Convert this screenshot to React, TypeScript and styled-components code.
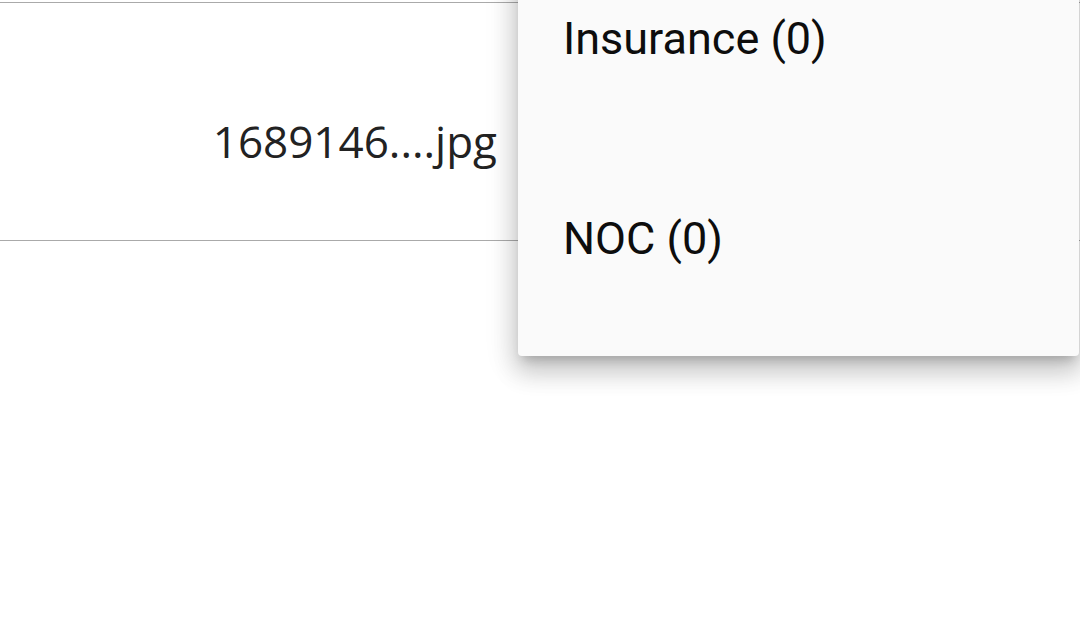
import React from "react";
import styled, { createGlobalStyle } from "styled-components";

const GlobalStyle = createGlobalStyle`
  html, body {
    margin: 0;
    padding: 0;
    background: #ffffff;
  }
  * { box-sizing: border-box; }
`;

const Stage = styled.div`
  position: relative;
  width: 1080px;
  height: 630px;
  overflow: hidden;
  background: #ffffff;
`;

const Table = styled.div`
  padding-top: 2px;
`;

const Row = styled.div`
  display: grid;
  grid-template-columns: 497px 1fr;
  height: 239px;
  border-top: 1px solid #aaaaaa;
  border-bottom: 1px solid #aaaaaa;
`;

const FileCell = styled.div`
  display: flex;
  justify-content: flex-end;
  align-items: flex-start;
  padding-top: 108px;
  font-family: "Open Sans", "Noto Sans", sans-serif;
  font-size: 44px;
  color: #222222;
  white-space: nowrap;
`;

const Menu = styled.ul`
  position: absolute;
  top: -77px;
  left: 518px;
  width: 561px;
  margin: 0;
  padding: 16px 0 17px;
  list-style: none;
  background: #fafafa;
  border-radius: 4px;
  box-shadow: 0 8px 10px -5px rgba(0, 0, 0, 0.2),
    0 16px 24px 2px rgba(0, 0, 0, 0.14), 0 6px 30px 5px rgba(0, 0, 0, 0.12);
`;

const MenuItem = styled.li`
  height: 200px;
  line-height: 200px;
  padding-left: 45px;
  font-family: Roboto, "Liberation Sans", sans-serif;
  font-size: 45px;
  color: #0d0d0d;
  white-space: nowrap;
`;

const items = ["Insurance (0)", "NOC (0)"];

export default function App() {
  return (
    <>
      <GlobalStyle />
      <Stage>
        <Table>
          <Row>
            <FileCell>1689146....jpg</FileCell>
            <div />
          </Row>
        </Table>
        <Menu>
          {items.map((label) => (
            <MenuItem key={label}>{label}</MenuItem>
          ))}
        </Menu>
      </Stage>
    </>
  );
}
